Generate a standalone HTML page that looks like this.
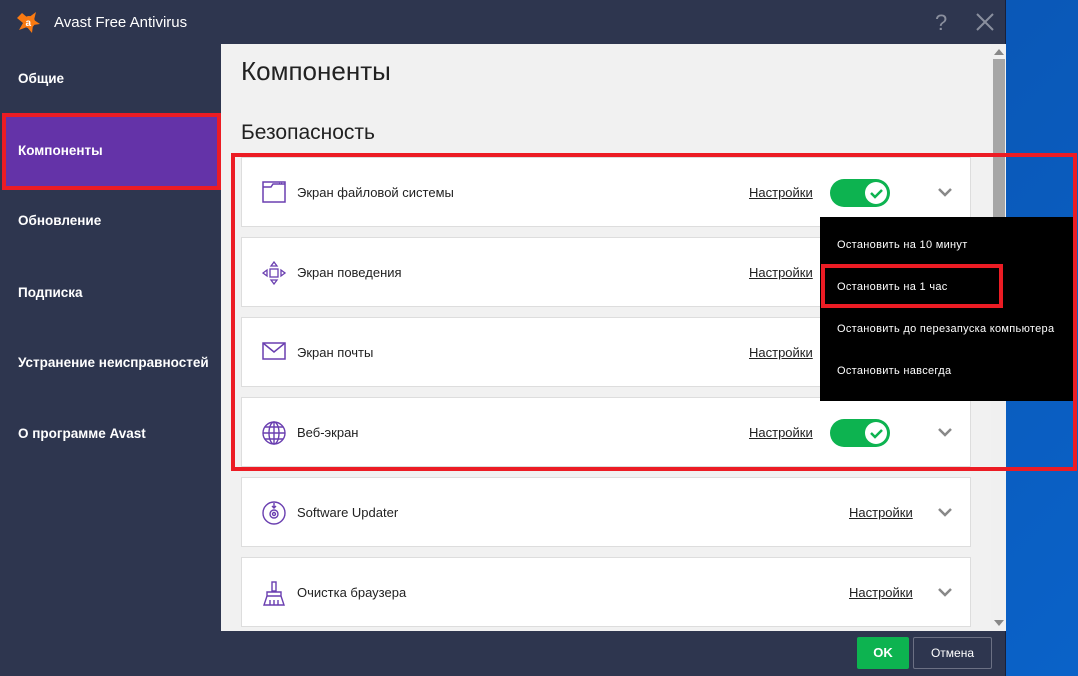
<!DOCTYPE html>
<html><head><meta charset="utf-8"><style>
*{margin:0;padding:0;box-sizing:border-box}
body{width:1078px;height:676px;overflow:hidden;position:relative;font-family:"Liberation Sans",sans-serif;background:linear-gradient(135deg,#0a4aa0,#0a62c8);}
.win{position:absolute;left:0;top:0;width:1006px;height:676px;background:#2e364f;border-right:1px solid #1a2038}
.title{position:absolute;left:54px;top:14px;color:#fff;font-size:15px}
.nav{position:absolute;left:18px;color:#fff;font-size:13.5px;font-weight:bold}
.content{position:absolute;left:221px;top:44px;width:770px;height:587px;background:#f1f1f1;overflow:hidden}
.sb{position:absolute;left:991px;top:44px;width:15px;height:587px;background:#f0f0f0}
.card{position:absolute;left:20px;width:730px;height:70px;background:#fff;border:1px solid #ddd}
.card .ic{position:absolute;left:20px;top:23px}
.card .nm{position:absolute;left:55px;top:27px;font-size:13px;color:#222}
.card .st{position:absolute;top:27px;font-size:13px;color:#222;text-decoration:underline}
.tg{position:absolute;left:588px;top:21px;width:60px;height:28px;border-radius:14px;background:#0db350}
.tg i{position:absolute;right:3px;top:3px;width:22px;height:22px;border-radius:50%;background:#fff}
.chev{position:absolute;left:696px;top:30px}
.red{position:absolute;border:4px solid #ec1c24}
.menu{position:absolute;left:820px;top:217px;width:254px;height:184px;background:#000;color:#fff;font-size:11px;letter-spacing:.3px}
.menu div{position:absolute;left:17px;white-space:nowrap}
</style></head><body>
<div class="win">
<svg style="position:absolute;left:16px;top:10px" width="26" height="26" viewBox="0 0 26 26"><path d="M6 3 L12 8 L20 2 L18 10 L24 14 L17 15 L16 23 L11 17 L3 20 L7 13 L1 8 Z" fill="#f97a12"/><circle cx="13" cy="12" r="6" fill="#f97a12"/><text x="9.5" y="16" font-size="10" font-weight="bold" fill="#fff" font-family="Liberation Sans">a</text></svg>
<div class="title">Avast Free Antivirus</div>
<div style="position:absolute;left:935px;top:10px;color:#8a8f9e;font-size:22px">?</div>
<svg style="position:absolute;left:976px;top:13px" width="18" height="18"><path d="M1 1L17 17M17 1L1 17" stroke="#8a8f9e" stroke-width="2"/></svg>
<div class="nav" style="top:71px">Общие</div>
<div style="position:absolute;left:4px;top:114px;width:214px;height:72px;background:#6433a8"></div>
<div class="nav" style="top:143px">Компоненты</div>
<div class="nav" style="top:213px">Обновление</div>
<div class="nav" style="top:285px">Подписка</div>
<div class="nav" style="top:355px">Устранение неисправностей</div>
<div class="nav" style="top:426px">О программе Avast</div>
<div class="content">
<div style="position:absolute;left:20px;top:12px;font-size:26px;color:#222">Компоненты</div>
<div style="position:absolute;left:20px;top:77px;font-size:21px;color:#222">Безопасность</div>
<div class="card" style="top:113px"><svg class="ic" width="24" height="22" viewBox="0 0 24 22" fill="none" stroke="#6a3fb0" stroke-width="1.5"><rect x="1" y="1" width="22" height="20"/><path d="M1 6H9L11 3H23"/><path d="M17 2.5h4" stroke-dasharray="1 1"/></svg><div class="nm">Экран файловой системы</div><div class="st" style="left:507px">Настройки</div><div class="tg"><i><svg width="22" height="22"><path d="M6 11l4 4 7-7" stroke="#0db350" stroke-width="2.5" fill="none"/></svg></i></div><svg class="chev" width="14" height="9"><path d="M1 1l6 6 6-6" stroke="#888" stroke-width="2.5" fill="none"/></svg></div>
<div class="card" style="top:193px"><svg class="ic" width="24" height="24" viewBox="0 0 24 24" fill="none" stroke="#6a3fb0" stroke-width="1.3"><rect x="8" y="8" width="8" height="8"/><path d="M12 1l3 4H9zM12 23l3-4H9zM1 12l4 3V9zM23 12l-4 3V9z"/></svg><div class="nm">Экран поведения</div><div class="st" style="left:507px">Настройки</div></div>
<div class="card" style="top:273px"><svg class="ic" width="24" height="20" viewBox="0 0 24 20" fill="none" stroke="#6a3fb0" stroke-width="1.5"><rect x="1" y="2" width="22" height="16"/><path d="M1 2l11 9 11-9"/></svg><div class="nm">Экран почты</div><div class="st" style="left:507px">Настройки</div></div>
<div class="card" style="top:353px"><svg class="ic" width="24" height="24" viewBox="0 0 24 24" fill="none" stroke="#6a3fb0" stroke-width="1.4"><circle cx="12" cy="12" r="11"/><ellipse cx="12" cy="12" rx="5" ry="11"/><path d="M1 12h22M3 6h18M3 18h18M12 1v22"/></svg><div class="nm">Веб-экран</div><div class="st" style="left:507px">Настройки</div><div class="tg"><i><svg width="22" height="22"><path d="M6 11l4 4 7-7" stroke="#0db350" stroke-width="2.5" fill="none"/></svg></i></div><svg class="chev" width="14" height="9"><path d="M1 1l6 6 6-6" stroke="#888" stroke-width="2.5" fill="none"/></svg></div>
<div class="card" style="top:433px"><svg class="ic" width="24" height="24" viewBox="0 0 24 24" fill="none" stroke="#6a3fb0" stroke-width="1.4"><circle cx="12" cy="12" r="11"/><circle cx="12" cy="13" r="4"/><circle cx="12" cy="13" r="1.5"/><path d="M12 2v5M10 5l2 2 2-2"/></svg><div class="nm">Software Updater</div><div class="st" style="left:607px">Настройки</div><svg class="chev" width="14" height="9"><path d="M1 1l6 6 6-6" stroke="#888" stroke-width="2.5" fill="none"/></svg></div>
<div class="card" style="top:513px"><svg class="ic" width="24" height="26" viewBox="0 0 24 26" fill="none" stroke="#6a3fb0" stroke-width="1.4"><rect x="10" y="1" width="4" height="9"/><path d="M5 11h14v4H5zM5 15l-3 9h20l-3-9M8 19v5M12 19v5M16 19v5"/></svg><div class="nm">Очистка браузера</div><div class="st" style="left:607px">Настройки</div><svg class="chev" width="14" height="9"><path d="M1 1l6 6 6-6" stroke="#888" stroke-width="2.5" fill="none"/></svg></div>
</div>
<div class="sb"><svg style="position:absolute;left:3px;top:5px" width="10" height="6"><path d="M0 6L5 0L10 6Z" fill="#888"/></svg><div style="position:absolute;left:2px;top:15px;width:12px;height:200px;background:#a6a6a6"></div><svg style="position:absolute;left:3px;top:576px" width="10" height="6"><path d="M0 0L5 6L10 0Z" fill="#888"/></svg></div>
<div style="position:absolute;left:857px;top:637px;width:52px;height:32px;background:#0db350;color:#fff;font-weight:bold;font-size:13px;text-align:center;line-height:32px;border-radius:2px">OK</div>
<div style="position:absolute;left:913px;top:637px;width:79px;height:32px;border:1px solid #6b7083;color:#fff;font-size:12px;text-align:center;line-height:30px;border-radius:2px">Отмена</div>
</div>
<div class="menu"><div style="top:22px">Остановить на 10 минут</div><div style="top:64px">Остановить на 1 час</div><div style="top:106px">Остановить до перезапуска компьютера</div><div style="top:148px">Остановить навсегда</div></div>
<div class="red" style="left:2px;top:113px;width:219px;height:77px"></div>
<div class="red" style="left:231px;top:153px;width:846px;height:318px"></div>
<div class="red" style="left:821px;top:264px;width:182px;height:44px"></div>
</body></html>
